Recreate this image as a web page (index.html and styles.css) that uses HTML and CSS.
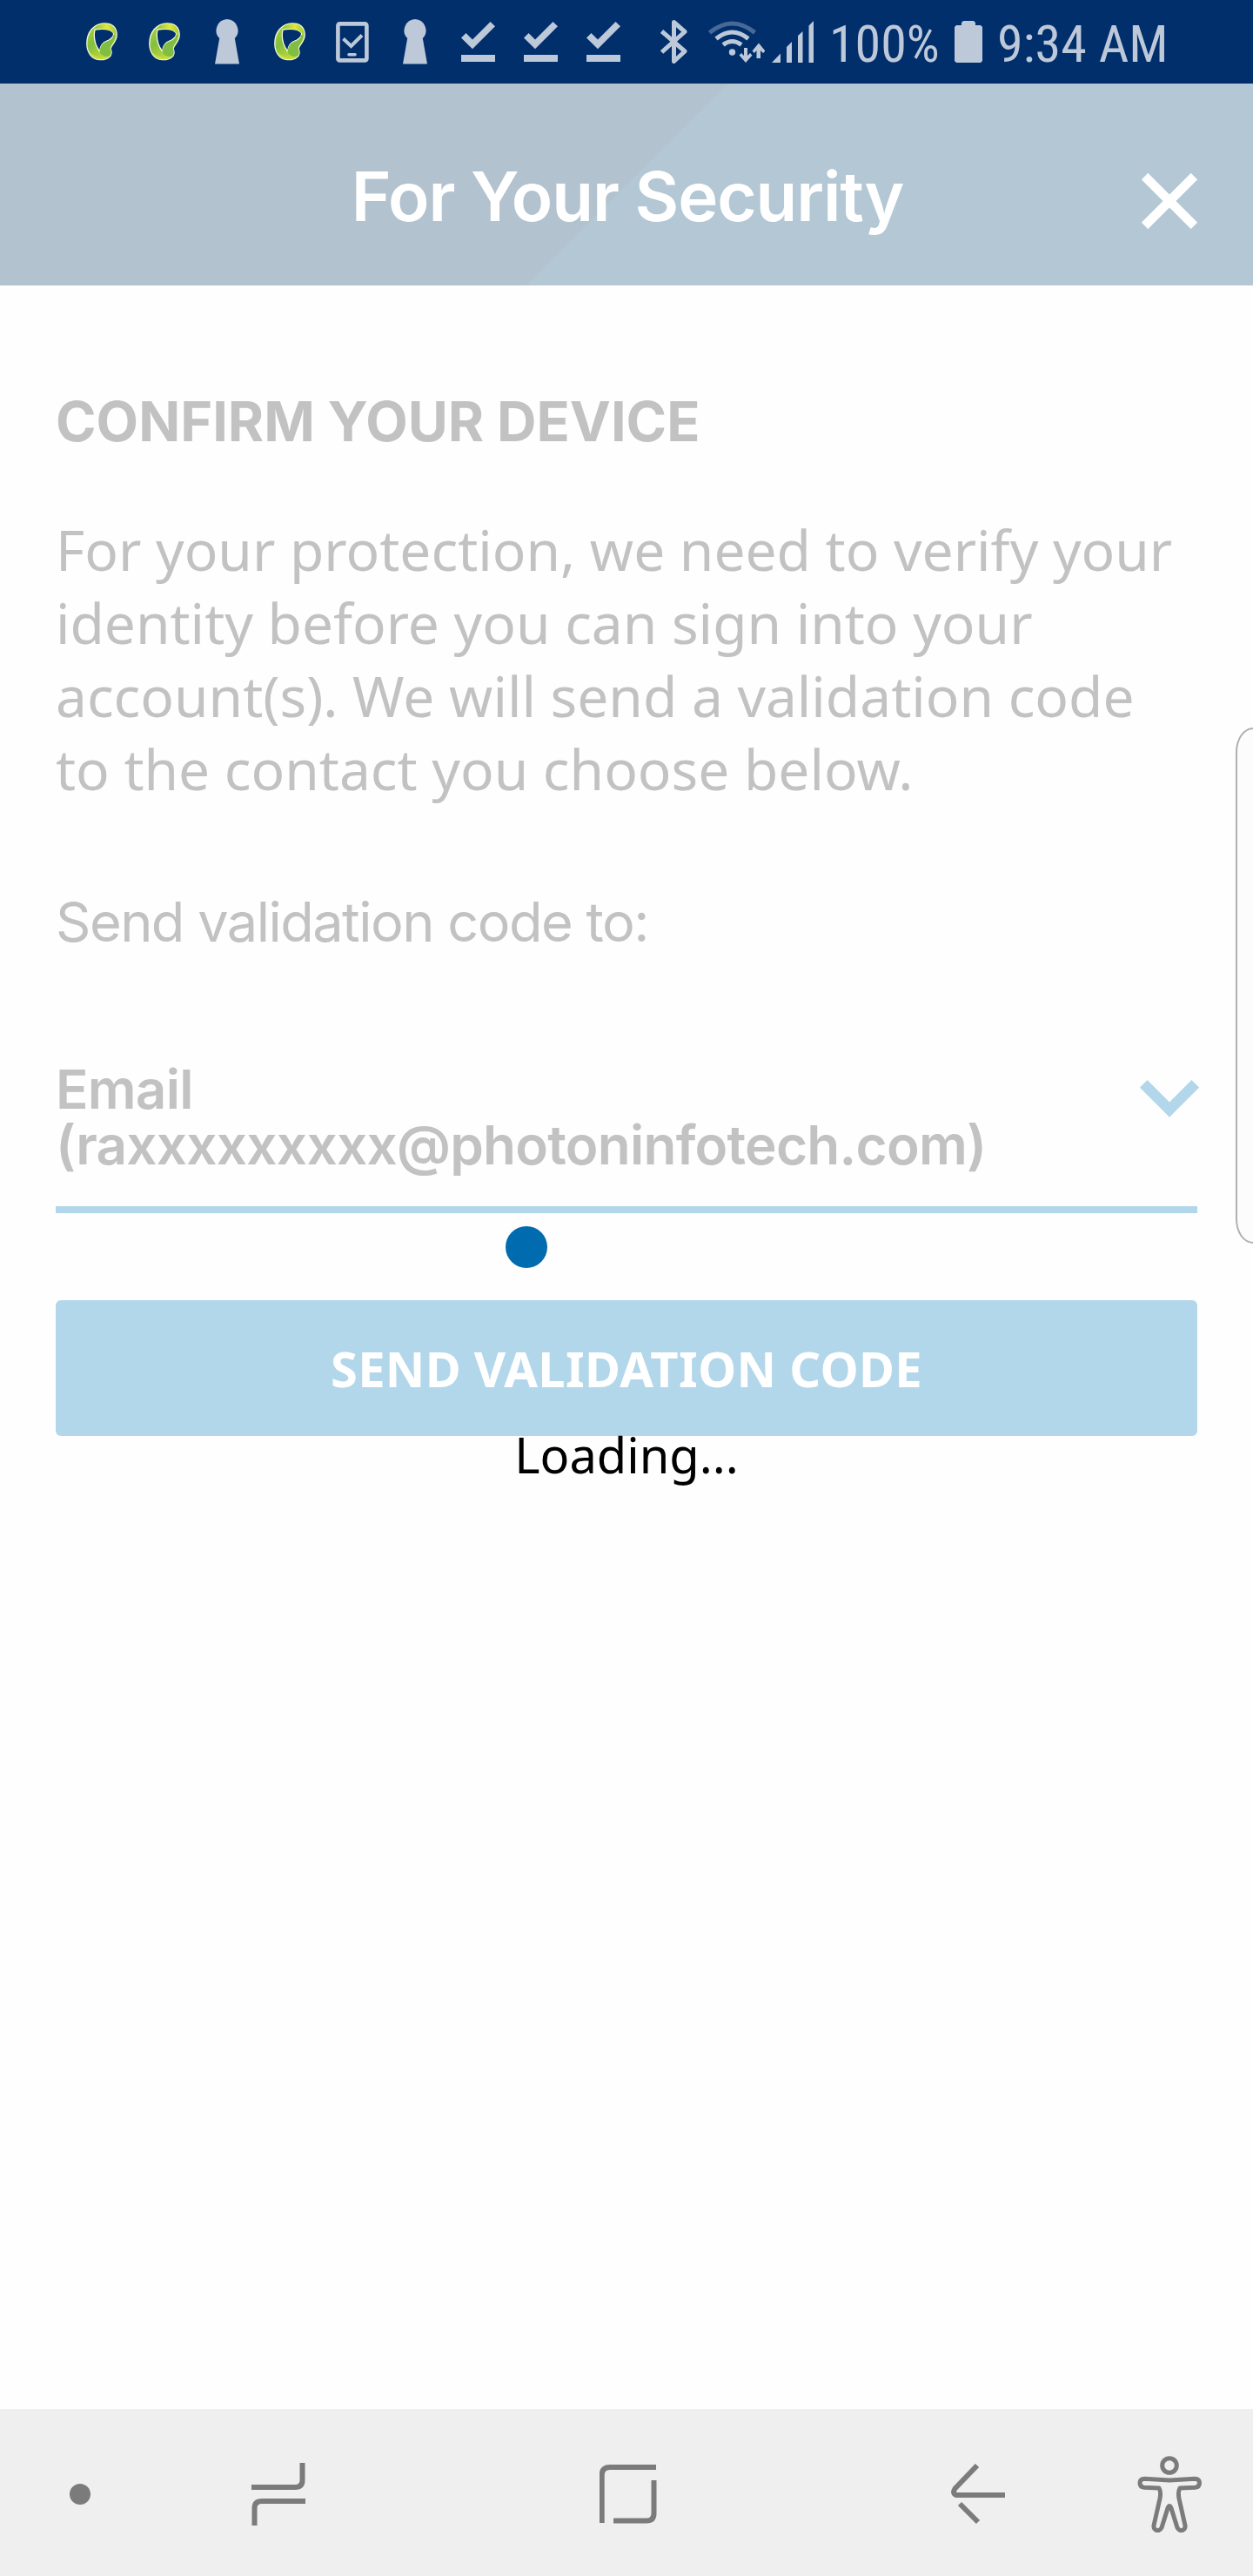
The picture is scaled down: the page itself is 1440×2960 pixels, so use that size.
FILE: index.html
```html
<!DOCTYPE html>
<html lang="en">
<head>
<meta charset="utf-8">
<title>For Your Security</title>
<link rel="stylesheet" href="styles.css">
</head>
<body>
<svg class="defs" aria-hidden="true">
  <defs>
    <linearGradient id="leafTop" x1="0" x2="1" y1="0" y2="0"><stop offset="0" stop-color="#8fc63e"/><stop offset=".55" stop-color="#e2e834"/><stop offset="1" stop-color="#a5cf3a"/></linearGradient>
    <linearGradient id="leafSide" x1="0" x2=".6" y1="0" y2="1"><stop offset="0" stop-color="#b4d435"/><stop offset=".5" stop-color="#83bf41"/><stop offset="1" stop-color="#c8dc36"/></linearGradient>
    <symbol id="leaf" viewBox="0 0 36 44">
      <path d="M21 .8C30 .8 35 5 35.200 14c0 8-6 11-7.200 16 2 4 1 8-2 10-3 2.500-7 3-11 2.500C6 42 .8 34 .8 24 .8 11 9 .8 21 .8zM10 8C8 18 11 27 15.500 33 16 26 20 22 26 20c4-2 6-4 5.500-8C28 7 18 7 10 8z" fill="url(#leafSide)" stroke="#f4f8dc" stroke-width="1.300" fill-rule="evenodd"/>
      <path d="M11 7C15 1 28-1 33 8l1 7C29 6 18 7 11 7z" fill="url(#leafTop)"/>
      <path d="M31 14c0 5-4 7-8 8-5 2-7 6-7.500 12 3 5 8 6 12 4 2-3 1-6 0-9 2-5 6-8 5.500-14z" fill="#80bd43"/>
      <path d="M4 34c5 5 13 7 23 5-4 4-19 6-23-5z" fill="#c9dd37"/>
    </symbol>
    <symbol id="keyhole" viewBox="0 0 28 52"><path d="M14 0a13 13 0 0 1 8.800 22L28 51.500H0L5.200 22A13 13 0 0 1 14 0z"/></symbol>
    <symbol id="done" viewBox="0 0 39 47"><path d="M0 38h39v8H0zM5.500 13l7.500 7.500L33.500 0l5.500 5.200-26 26L0 18.500z"/></symbol>
  </defs>
</svg>

<header class="status">
  <div class="notices">
    <span class="slot"><svg class="leaf"><use href="#leaf"/></svg></span>
    <span class="slot"><svg class="leaf"><use href="#leaf"/></svg></span>
    <span class="slot"><svg class="keyhole"><use href="#keyhole"/></svg></span>
    <span class="slot"><svg class="leaf"><use href="#leaf"/></svg></span>
    <span class="slot"><svg class="tablet" viewBox="0 0 38 47"><g fill="none" stroke="currentColor"><rect x="2.400" y="2.400" width="33" height="42" rx="2" stroke-width="4.600"/><path d="M8.500 19.500l9 8.500L30 15.500" stroke-width="4"/><path d="M15 37.800h7" stroke-width="3.600" stroke-linecap="round"/></g></svg></span>
    <span class="slot"><svg class="keyhole"><use href="#keyhole"/></svg></span>
    <span class="slot"><svg class="done"><use href="#done"/></svg></span>
    <span class="slot"><svg class="done"><use href="#done"/></svg></span>
    <span class="slot"><svg class="done"><use href="#done"/></svg></span>
  </div>
  <svg class="bluetooth" viewBox="0 0 32 50"><path d="M2.500 13L29 36 16.500 47.500v-45L29 13.500 2.500 37" fill="none" stroke="currentColor" stroke-width="5" stroke-linejoin="round"/></svg>
  <svg class="wifi" viewBox="0 0 65 48"><g fill="none" stroke="currentColor" stroke-width="5"><path d="M1.500 13.500Q27.500-7.500 53.500 13.500" opacity=".38"/><path d="M9 20.500Q27.500 5.500 46 20.500"/><path d="M17 27.500Q27.500 19.500 38 27.500"/></g><circle cx="27.500" cy="36" r="3.700"/><path d="M41 31h4v9l3-3 2.500 2.500L43 48l-7.500-8.500L38 37l3 3zM55.500 43h4.500v-9l3 3 2.500-2.500-7.500-9-7.500 9L53 37l2.500-3z"/></svg>
  <svg class="signal" viewBox="0 0 48 48"><path d="M0 48l10-10.500V48zM17 30l6-6v24h-6zM30 17l5.500-5v36H30zM42.500 5.500L48 0v48h-5.500z"/></svg>
  <span class="level">100%</span>
  <svg class="battery" viewBox="0 0 32 48"><path d="M10 0h12l2 2v3h6l2 2v39l-2 2H2l-2-2V7l2-2h6V2z"/></svg>
  <span class="clock">9:34 AM</span>
</header>

<div class="titlebar">
  <h1 class="title">For Your Security</h1>
  <svg class="close" viewBox="0 0 64 64"><path d="M3.600 3.600l56.800 56.800M60.400 3.600L3.600 60.400" stroke="#fff" stroke-width="10.500"/></svg>
</div>

<main class="content">
  <h2 class="heading">CONFIRM YOUR DEVICE</h2>
  <p class="intro">For your protection, we need to verify your<br>identity before you can sign into your<br>account(s). We will send a validation code<br>to the contact you choose below.</p>
  <p class="label">Send validation code to:</p>
  <div class="select">
    <div class="value">Email<br>(raxxxxxxxxx@photoninfotech.com)</div>
    <svg class="chevron" viewBox="0 0 68 43"><path d="M4.300 4.300L34 34 63.700 4.300" fill="none" stroke="#b3d7ea" stroke-width="12.200"/></svg>
  </div>
  <button class="send">SEND VALIDATION CODE</button>
  <p class="loading">Loading...</p>
  <span class="spinner"></span>
</main>
<span class="edge"></span>

<nav class="nav">
  <svg class="dot" viewBox="0 0 24 24"><circle cx="12" cy="12" r="12" fill="#7b7b7b"/></svg>
  <svg width="62" height="72" viewBox="0 0 62 72"><path d="M0 28h50q8.500 0 8.500-8V0M62 44H12q-8.500 0-8.500 8v20"/></svg>
  <svg width="66" height="68" viewBox="0 0 66 68"><path d="M2.700 67V12q0-9 9-9H65M62.500 18v38q0 8.500-8.500 8.500H16"/></svg>
  <svg width="62" height="70" viewBox="0 0 62 70"><path d="M30 2L4.500 28.500Q1 34 6 36H62M10 46l21 21"/></svg>
  <svg width="74" height="88" viewBox="0 0 74 88"><circle cx="37" cy="11" r="8.300" stroke-width="5"/><path d="M37 28L66 26.200q5.500 0 5.500 5 0 4.500-5 5L49 37q-2.500 4-1 12l7 31q.5 4-3 5.500-4 1-6-3L39 60q-2-5-4 0L28 82.500q-2 4-6 3-3.500-1.500-3-5.500l7-31q1.500-8-1-12L8 36.200q-5-.5-5-5 0-5 5.500-5z" stroke-width="5" stroke-linejoin="round"/></svg>
</nav>
</body>
</html>
```
FILE: styles.css
```css
* { box-sizing: border-box; }

body {
  margin: 0;
  width: 1440px;
  height: 2960px;
  display: flex;
  flex-direction: column;
  position: relative;
  overflow: hidden;
  background: #fefefe;
  font-family: "Noto Sans", sans-serif;
  color: #c2c2c2;
}

h1, h2, p { margin: 0; }
svg { display: block; flex: none; }
.defs { position: absolute; width: 0; height: 0; }

.status {
  height: 96px;
  flex: none;
  display: flex;
  align-items: center;
  padding-left: 81px;
  background: #002f6c;
  color: #bdc8d9;
  fill: #bdc8d9;
  font-family: "Roboto Condensed", Roboto, sans-serif;
  font-stretch: 75%;
  font-size: 60px;
  line-height: 90px;
  white-space: nowrap;
}
.notices { display: flex; width: 648px; }
.slot { width: 72px; display: flex; justify-content: center; align-items: center; }
.leaf { width: 36px; height: 44px; }
.keyhole { width: 28px; height: 52px; }
.tablet { width: 38px; height: 47px; }
.done { width: 39px; height: 47px; }
.bluetooth { width: 32px; height: 50px; margin-left: 29px; }
.wifi { width: 65px; height: 48px; margin-left: 24px; }
.signal { width: 48px; height: 48px; margin-left: 8px; }
.level { width: 131px; margin-left: 18px; padding-top: 5px; }
.battery { width: 32px; height: 48px; margin-left: 13px; }
.clock { margin-left: 17px; padding-top: 5px; }

.titlebar {
  height: 232px;
  flex: none;
  display: grid;
  grid-template-columns: 1fr 64px;
  padding: 0 64px;
  background: linear-gradient(135deg, #b3c2cf 0 50%, #b3c7d4 50%);
}
.title {
  padding: 83px 0 0 66px;
  text-align: center;
  font: 600 78px/94px Inter, sans-serif;
  letter-spacing: -1.05px;
  color: #fff;
}
.close { width: 64px; height: 64px; margin-top: 103px; }

.content { flex: 1; padding: 0 64px; position: relative; }
.heading { padding-top: 118px; font: 700 63px/76px Inter, sans-serif; }
.intro { padding-top: 68px; font-size: 64px; line-height: 84px; white-space: nowrap; }
.label { padding-top: 95px; font: 400 63px/76px Inter, sans-serif; letter-spacing: -1.5px; }
.select {
  display: flex;
  justify-content: space-between;
  margin-top: 123px;
  height: 174px;
  border-bottom: 8px solid #b3d7ea;
}
.value { font: 600 62px/64px Inter, sans-serif; letter-spacing: -0.75px; white-space: nowrap; }
.chevron { width: 68px; height: 43px; margin: 21px -2px 0 0; }
.send {
  display: block;
  width: 1312px;
  height: 156px;
  margin-top: 100px;
  padding: 0;
  border: 0;
  border-radius: 6px;
  background: #b3d7ea;
  color: #fff;
  font: 700 56px/156px "Noto Sans", sans-serif;
  letter-spacing: 0.3px;
}
.loading { text-align: center; color: #000; font-size: 56px; line-height: 76px; margin-top: -17px; }
.spinner {
  position: absolute;
  left: 581px;
  top: 1081px;
  width: 48px;
  height: 48px;
  border-radius: 50%;
  background: #006bae;
}
.edge {
  position: absolute;
  left: 1420px;
  top: 836px;
  width: 40px;
  height: 593px;
  border: 2px solid #b0b0b0;
  border-radius: 20px / 28px;
  background: #fcfcfc;
}

.nav {
  height: 192px;
  flex: none;
  display: grid;
  grid-template-columns: 184px 272px 532px 272px 168px;
  align-items: center;
  justify-items: center;
  padding-top: 4px;
  background: #efefef;
  fill: none;
  stroke: #7b7b7b;
  stroke-width: 6;
}
.dot { width: 24px; height: 24px; stroke: none; }
```
